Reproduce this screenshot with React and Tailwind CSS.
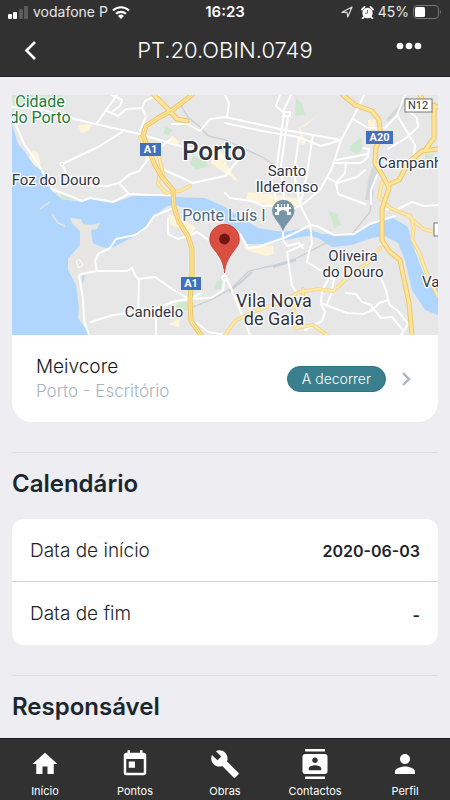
import {
  MdBuild,
  MdContacts,
  MdHome,
  MdPerson,
  MdToday,
} from 'react-icons/md';

const NAV_ITEMS = [
  { label: 'Início', icon: MdHome },
  { label: 'Pontos', icon: MdToday },
  { label: 'Obras', icon: MdBuild },
  { label: 'Contactos', icon: MdContacts },
  { label: 'Perfil', icon: MdPerson },
];

const DATES = [
  { label: 'Data de início', value: '2020-06-03' },
  { label: 'Data de fim', value: '-' },
];

// Local streets, drawn white
const STREETS = [
  'M12 107L40 109L78 120L140 134L172 144L206 152L226 157',
  'M97 123L117 95',
  'M107 111L118 116L126 109L142 108L145 101L158 95',
  'M112 95L122 100L120 106L113 111',
  'M142 108L146 116L140 131',
  'M122 132L98 147L62 164L66 173L75 179L92 186L108 186L119 183L130 174L139 171L146 162L158 149L171 139',
  'M119 183L129 194',
  'M16 125L24 144L37 162L52 189L70 196L82 201L90 198L113 202L129 194L150 195L172 195',
  'M158 167L178 176L193 183L206 180L225 176L238 160',
  'M146 162L150 149',
  'M172 124L188 124L200 131L210 119L225 117L280 129L341 140L357 110L364 95',
  'M225 123L262 131L298 137L321 146L341 140',
  'M225 95L229 103L227 117',
  'M280 95L276 106L284 113L283 120L277 165L271 180L276 199',
  'M291 95L283 112L290 112L290 116L283 116',
  'M288 116L281 166L284 200',
  'M313 135L306 179L300 205L310 224L312 243L309 252L307 262L320 270L338 276',
  'M299 137L294 173L300 205',
  'M341 140L332 168L320 190L303 204',
  'M334 163L361 163L368 157L369 149L363 148',
  'M336 160L368 154',
  'M346 162L345 173L336 183L338 194L365 204',
  'M327 177L337 183L357 177L365 170',
  'M353 119L368 128L385 128L397 115L405 95',
  'M397 115L415 145L414 159L408 168',
  'M388 149L406 138L418 127L417 118L405 108',
  'M225 193L230 198L252 201L263 206L278 206L289 211L301 205',
  'M377 175L371 190L371 204',
  'M386 209L398 209L412 202L424 206L438 205',
  'M89 335L84 320L83 298L79 276L81 274L97 271L127 271L132 268L135 275L138 279L155 277L172 289L189 299L211 298L223 290L225 275',
  'M97 271L95 261L98 254L110 248L116 239L135 235L147 227L154 216L171 209',
  'M139 278L138 315',
  'M91 322L113 315L137 312L157 308L173 302L187 299',
  'M156 309L156 335',
  'M168 219L168 234L178 239L191 235L197 232L210 241L222 262L225 275',
  'M171 302L190 299L201 293',
  'M225 275L231 288L238 305L247 327L250 335',
  'M240 234L248 248L258 247L272 242L284 238L299 231L310 225L317 226L334 235L354 234L370 224L395 216',
  'M283 230L283 240L287 246L299 243L303 248',
  'M303 245L287 252L292 286L298 294',
  'M330 276L322 291L321 304L325 312L322 321L305 330',
  'M325 277L334 279L331 294L327 304',
  'M346 293L356 294L362 302L371 305L373 310L363 314L347 313L323 304',
  'M372 307L381 318L392 317L402 329',
  'M373 309L379 303L388 300',
  'M380 276L386 290L389 304L399 312L408 324L401 335',
  'M197 323L208 332L225 335',
];

// Motorways, drawn with a darker casing
const MOTORWAYS = [
  'M192 95L171 111L158 118L146 126L143 135L149 151L155 165L162 177L173 190L174 207L179 222L188 236L192 249L192 275L190 300L191 321L201 335',
  'M154 95L166 107L177 119L187 121',
  'M343 95L355 105L372 111L379 120L381 138L376 147L375 163L383 176L389 188L386 197L382 209L382 240L389 251L400 260L404 279L409 303L412 335',
  'M438 149L422 151L409 162L399 180L388 185',
  'M438 107L425 105L420 95',
  'M434 105L434 138L426 149',
];

const MAIN_ROADS = [
  'M160 171L158 184L166 193L180 191L190 186',
  'M140 137L145 148L157 148L164 178',
  'M382 182L379 197L390 208L407 215L423 229L438 233',
  'M410 215L414 228L412 239L420 254L425 269L432 285L438 296',
  'M225 335L235 321L252 312L276 304L299 292L318 289L333 291L342 283L352 274L373 259L380 248',
  'M294 300L295 328L313 325L327 335',
  'M303 289L303 296',
];

const PARKS = [
  'M12 95H62L65 103L48 108L26 105L14 110Z',
  'M166 127L173 130L168 135L163 133Z',
  'M193 156L205 158L208 166L196 170L190 164Z',
  'M296 98L302 104L305 115L295 116Z',
  'M350 146L361 137L363 147L359 154L350 151Z',
  'M425 154L433 154L432 160L425 159Z',
  'M328 210L337 215L341 225L334 228L332 220Z',
  'M61 194L75 197L73 200L62 200Z',
  'M178 302L190 302L188 311L175 308Z',
  'M217 281L223 280L221 289L214 290Z',
];

const BUILT_UP = [
  'M33 150L38 153L41 165L36 167L29 158Z',
  'M78 125L91 124L89 131L81 133Z',
  'M172 136L180 142L175 146L169 141Z',
  'M212 148L223 153L228 167L238 182L226 174L211 163Z',
  'M248 192L270 194L301 199L297 206L268 205L246 199Z',
  'M325 109L305 126L300 128L306 144L301 145L299 128L314 118Z',
  'M168 214L184 219L196 228L191 235L180 228L171 225Z',
  'M244 247L273 246L274 254L266 256L246 250Z',
  'M368 120L376 119L375 127L368 126Z',
  'M173 322L180 318L179 328L168 324Z',
];

const MAP_LABELS = [
  { x: 40, y: 107, size: 16, lines: ['Cidade', 'do Porto'], fill: '#1e7a38' },
  { x: 56, y: 185, size: 15, lines: ['Foz do Douro'] },
  { x: 214, y: 160, size: 26, lines: ['Porto'], weight: 500 },
  { x: 287, y: 176, size: 15, lines: ['Santo', 'Ildefonso'] },
  { x: 224, y: 221, size: 16, lines: ['Ponte Luís I'], fill: '#45677d' },
  { x: 353, y: 261, size: 15, lines: ['Oliveira', 'do Douro'] },
  { x: 154, y: 317, size: 15, lines: ['Canidelo'] },
  { x: 274, y: 307, size: 18, lines: ['Vila Nova', 'de Gaia'] },
];

// Labels that run off the right side of the map
const EDGE_LABELS = [
  { x: 378, y: 168, text: 'Campanhã' },
  { x: 422, y: 287, text: 'Valbom' },
];

const SHIELDS = [
  { label: 'A1', x: 140, y: 143, width: 21 },
  { label: 'A20', x: 366, y: 131, width: 27 },
  { label: 'A1', x: 181, y: 277, width: 20 },
];

function StatusBar() {
  return (
    <div className="grid h-6 grid-cols-[1fr_auto_1fr] items-center px-2 text-sm leading-6">
      <div className="flex items-center gap-1 text-gray-200">
        <svg viewBox="0 0 21 13" className="h-[13px] w-[21px]" aria-hidden="true">
          <rect x="0" y="8" width="4" height="5" rx="1" fill="#fff" />
          <rect x="5" y="6" width="4" height="7" rx="1" fill="#fff" />
          <rect x="11" y="3" width="4" height="10" rx="1" fill="#5b5b5b" />
          <rect x="16" y="0" width="4" height="13" rx="1" fill="#5b5b5b" />
        </svg>
        <span className="whitespace-nowrap">vodafone P</span>
        <svg viewBox="0 0 18 13" className="h-[13px] w-[18px]" aria-hidden="true">
          <g fill="none" stroke="#fff" strokeWidth="2.2">
            <path d="M1 4.5a11.5 11.5 0 0 1 16 0" />
            <path d="M4 7.8a7.2 7.2 0 0 1 10 0" />
          </g>
          <path d="M6 10a4.4 4.4 0 0 1 6 0l-3 3z" fill="#fff" />
        </svg>
      </div>
      <span className="text-[15px] font-semibold">16:23</span>
      <div className="flex items-center justify-end gap-1 text-gray-200">
        <svg viewBox="0 0 12 12" className="size-3" aria-hidden="true">
          <path d="M1 6.3L11 1L6.8 11L6 6.3Z" fill="none" stroke="#ddd" strokeWidth="1.2" strokeLinejoin="round" />
        </svg>
        <svg viewBox="0 0 13 13" className="ml-1 size-[13px]" aria-hidden="true">
          <path d="M1 3.5L3.5 1M12 3.5L9.5 1M3 11l-1.5 1.5M10 11l1.5 1.5" stroke="#eee" strokeWidth="1.8" strokeLinecap="round" />
          <circle cx="6.5" cy="7" r="5.2" fill="#fff" />
          <path d="M6.5 4v3.2H4" fill="none" stroke="#777" />
        </svg>
        <span>45%</span>
        <svg viewBox="0 0 29 14" className="h-[14px] w-[29px]" aria-hidden="true">
          <rect x="0.5" y="0.5" width="25" height="13" rx="3.5" fill="none" stroke="#777" />
          <rect x="2" y="2" width="10" height="10" rx="1.5" fill="#fff" />
          <path d="M27 5q2 2 0 4z" fill="#777" />
        </svg>
      </div>
    </div>
  );
}

function Header() {
  return (
    <header className="border-b border-[#222] bg-[#313131] text-white">
      <StatusBar />
      <div className="grid h-[52px] grid-cols-[1fr_auto_1fr] items-center px-5">
        <button type="button" aria-label="Voltar" className="justify-self-start py-2">
          <svg viewBox="0 0 20 20" className="size-5" aria-hidden="true">
            <path d="M15 2L6.5 10.5L15 19" fill="none" stroke="#fff" strokeWidth="2.6" />
          </svg>
        </button>
        <h1 className="text-[22px] font-light">PT.20.OBIN.0749</h1>
        <button type="button" aria-label="Mais opções" className="-mt-2 mr-2 justify-self-end py-2">
          <svg viewBox="0 0 26 8" className="h-2 w-[26px]" fill="#fff" aria-hidden="true">
            <circle cx="4" cy="4" r="3.3" />
            <circle cx="13" cy="4" r="3.3" />
            <circle cx="22" cy="4" r="3.3" />
          </svg>
        </button>
      </div>
    </header>
  );
}

function SiteMap() {
  return (
    <svg
      viewBox="12 95 426 240"
      preserveAspectRatio="xMidYMid slice"
      className="block h-60 w-full bg-[#e7e7e7] font-['Roboto',sans-serif]"
      role="img"
      aria-label="Mapa do Porto"
    >
      {/* Sea and river */}
      <path
        d="M12 124L15 134L18 144L25 152L33 164L43 172L52 191L62 199L82 202L90 198L113 203L133 196L153 196L175 197L205 198L225 207L238 216L258 228L283 232L305 228L322 234L352 235L372 223L392 217L408 227L412 243L422 270L428 282L438 287V315L425 310L412 290L405 260L398 243L385 236L372 238L352 245L332 247L318 238L308 236L285 240L268 244L247 244L238 230L225 222L195 212L175 205L167 206L150 220L142 232L127 240L110 249L102 247L92 243L80 297L78 318L90 335H12Z"
        fill="#b1d6fd"
      />
      <path
        d="M70 218L81 219L83 224L91 225L100 223L97 229L91 230L93 245L103 248L110 251L98 256L96 271L82 276L84 298L85 316L91 335L80 321L78 300L76 285L68 270L68 259L80 245L80 231L72 223Z"
        fill="#e7e6e3"
      />
      <path d="M52 214L58 223L65 226" fill="none" stroke="#e2e4e5" strokeWidth="1.5" />
      <path d="M40 209L50 202" fill="none" stroke="#e2e4e5" strokeWidth="1.5" />
      <path d="M76 262L79 259L83 265L79 268Z" fill="none" stroke="#fff" />

      {PARKS.map((d) => <path key={d} d={d} fill="#cde8cf" />)}
      {BUILT_UP.map((d) => <path key={d} d={d} fill="#fdf4d9" />)}

      {/* Railways */}
      <g fill="none" stroke="#cbced1" strokeWidth="1.3">
        <path d="M180 104L188 117L200 127L208 136L226 140L262 157L275 165" />
        <path d="M191 308L215 298L232 288L249 271L271 266L297 258L330 241L352 234L370 212L373 190" />
        <path d="M229 292L242 281L252 272" strokeWidth="2" />
        <path d="M273 267L296 260" strokeWidth="2" />
        <path d="M376 166L371 181L368 200" stroke="#d3d8db" strokeWidth="6" />
        <path d="M408 98L399 109L388 121" stroke="#d3d8db" strokeWidth="5" />
      </g>

      <g fill="none" stroke="#fff" strokeWidth="2" strokeLinejoin="round" strokeLinecap="round">
        {STREETS.map((d) => <path key={d} d={d} />)}
      </g>
      <circle cx="62" cy="164" r="1.8" fill="#e7e7e7" stroke="#fff" />
      <circle cx="224.5" cy="278" r="2.2" fill="#e7e7e7" stroke="#fff" strokeWidth="1.5" />

      <g fill="none" strokeLinejoin="round" strokeLinecap="round">
        {MAIN_ROADS.map((d) => <path key={d} d={d} stroke="#efcf7a" strokeWidth="3.6" />)}
        {MAIN_ROADS.map((d) => <path key={d} d={d} stroke="#fde8a5" strokeWidth="2.4" />)}
        {MOTORWAYS.map((d) => <path key={d} d={d} stroke="#ebc565" strokeWidth="5" />)}
        {MOTORWAYS.map((d) => <path key={d} d={d} stroke="#fde498" strokeWidth="3.2" />)}
        <path d={MOTORWAYS[0]} stroke="#f2cd6c" strokeWidth="0.8" />
      </g>

      {/* Place names */}
      <g stroke="#fff" strokeWidth="2.5" strokeLinejoin="round" paintOrder="stroke">
        {MAP_LABELS.map(({ x, y, size, lines, fill = '#30343f', weight = 400 }) => (
          <text
            key={lines[0]}
            textAnchor="middle"
            fontSize={size}
            fontWeight={weight}
            fill={fill}
          >
            {lines.map((line, i) => (
              <tspan key={line} x={x} y={y + i * (size > 15 ? size : 16)}>{line}</tspan>
            ))}
          </text>
        ))}
        {EDGE_LABELS.map(({ x, y, text }) => (
          <text key={text} x={x} y={y} fontSize="15" fill="#30343f">{text}</text>
        ))}
      </g>

      {/* Road shields */}
      {SHIELDS.map(({ label, x, y, width }) => (
        <g key={`${label}-${x}`}>
          <rect x={x} y={y} width={width} height="13" fill="#426fc0" />
          <text x={x + width / 2} y={y + 10} textAnchor="middle" fontSize="11" fontWeight="700" fill="#fff">
            {label}
          </text>
        </g>
      ))}
      <rect x="405" y="99" width="27" height="13" fill="#fff" stroke="#777" />
      <text x="418" y="109" textAnchor="middle" fontSize="11" fill="#333">N12</text>
      <rect x="434" y="223" width="20" height="13" fill="#fff" stroke="#777" />

      {/* Bridge marker */}
      <path d="M283 232C281 223 272 219 272 210A11.300 11.300 0 0 1 294.500 210C294.500 219 285 223 283 232Z" fill="#7895a8" />
      <path
        d="M277 204h2v3h2v-3h1v3h2v-3h1v3h2v-3h2v3h2v2h-2v3h2v3h-4v-3q-4-4-8 0v3h-4v-3h2v-3h-2v-2h2z"
        fill="#fff"
      />

      {/* Site pin */}
      <path
        d="M224.500 273C223.500 263 220.500 258 216 252C212.500 247.500 209.700 244.500 209.700 239A14.800 14.800 0 0 1 239.300 239C239.300 244.500 236.500 247.500 233 252C228.500 258 225.500 263 224.500 273Z"
        fill="#d94f41"
        stroke="#c13c30"
        strokeWidth="0.8"
      />
      <circle cx="224.500" cy="239" r="5.400" fill="#731712" />
    </svg>
  );
}

function SiteCard() {
  return (
    <section className="overflow-hidden rounded-b-[20px] bg-white">
      <SiteMap />
      <a href="#meivcore" className="flex h-[87px] items-center px-6">
        <div className="flex-1">
          <p className="text-[19px] leading-6 font-light text-[#161a1f]">Meivcore</p>
          <p className="text-[17px] leading-6 font-light text-[#a8b5bf]">Porto - Escritório</p>
        </div>
        <span className="rounded-full border border-[#2b7484] bg-[#3a7f8e] px-[14px] text-sm leading-6 font-light text-white">
          A decorrer
        </span>
        <svg viewBox="0 0 16 16" className="ml-3 size-4" aria-hidden="true">
          <path d="M5 2L11 8L5 14" fill="none" stroke="#adb6bd" strokeWidth="2.4" />
        </svg>
      </a>
    </section>
  );
}

function Section({ title, children }) {
  return (
    <section className="mt-[30px] border-t border-[#dddfe4]">
      <h2 className="pt-3.5 pb-4.5 text-2xl leading-[34px] font-semibold text-[#1b272e]">{title}</h2>
      {children}
    </section>
  );
}

function BottomNav() {
  return (
    <nav className="grid h-[62px] grid-cols-5 border-t border-[#1c1c1c] bg-[#313131] text-white">
      {NAV_ITEMS.map(({ label, icon: Icon }) => (
        <a key={label} href={`#${label}`} className="flex flex-col items-center pt-2.5">
          <Icon className="size-[30px]" />
          <span className="mt-1 text-[11px] leading-4">{label}</span>
        </a>
      ))}
    </nav>
  );
}

function App() {
  return (
    <div className="flex h-screen flex-col bg-[#eeedf2] font-['Inter',sans-serif]">
      <Header />
      <main className="min-h-0 flex-1 overflow-hidden px-3 pt-[18px]">
        <SiteCard />
        <Section title="Calendário">
          <dl className="divide-y divide-[#cdd6dd] rounded-xl bg-white text-[#1c242b]">
            {DATES.map(({ label, value }) => (
              <div key={label} className="flex h-[63px] items-center justify-between px-[18px] pt-0.5">
                <dt className="text-[19px] font-light">{label}</dt>
                <dd className="text-base font-semibold">{value}</dd>
              </div>
            ))}
          </dl>
        </Section>
        <Section title="Responsável" />
      </main>
      <BottomNav />
    </div>
  );
}

export default App;
